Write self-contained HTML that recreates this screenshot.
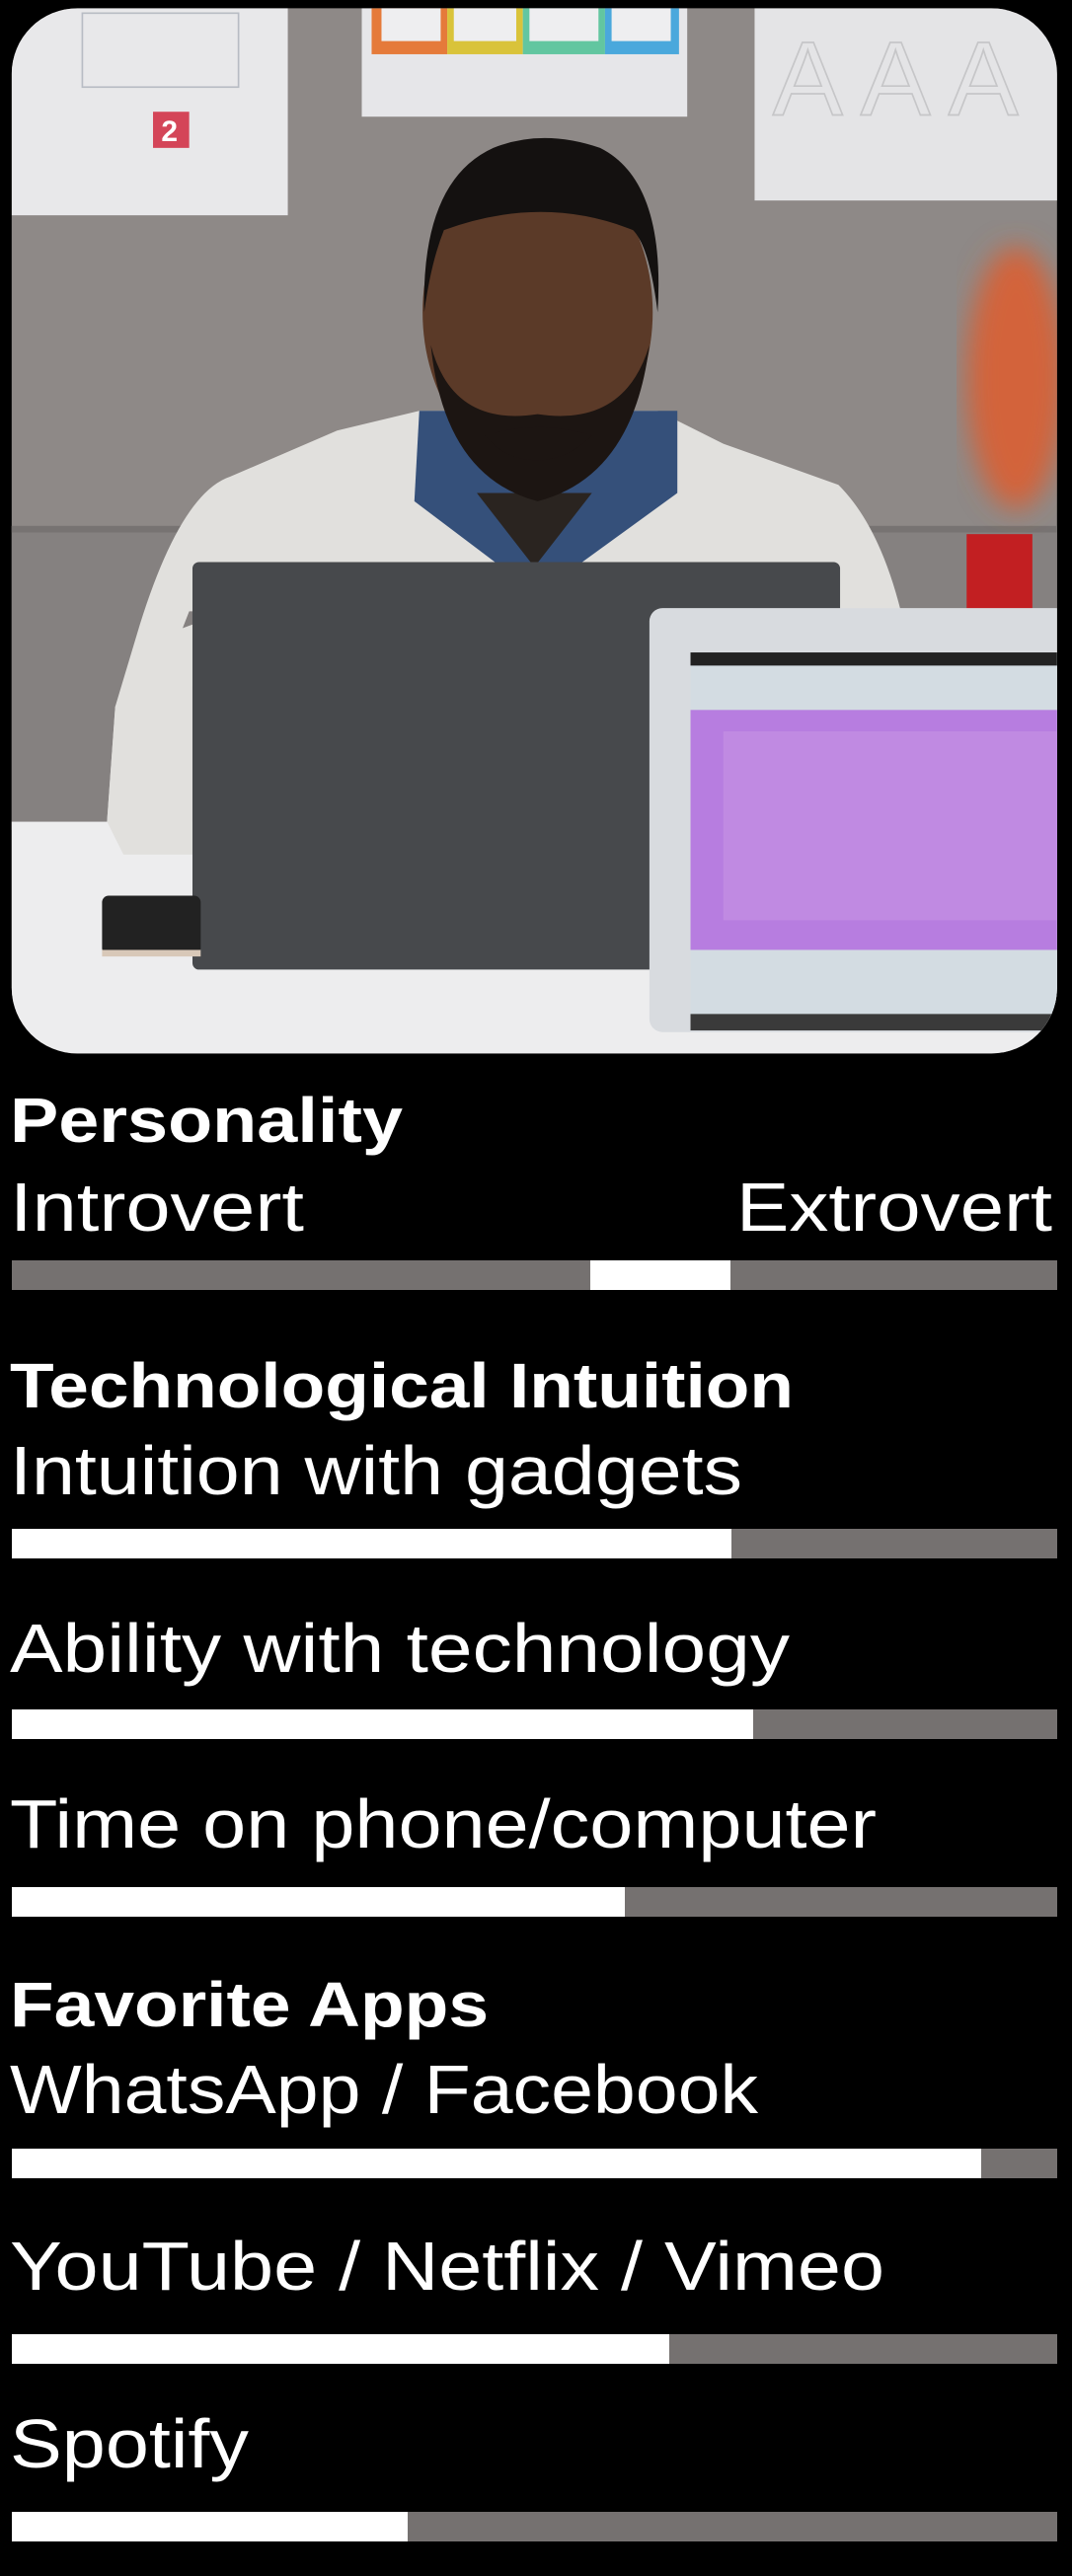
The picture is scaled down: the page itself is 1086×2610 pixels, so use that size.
<!DOCTYPE html>
<html><head><meta charset="utf-8"><style>
html,body{margin:0;padding:0;background:#000;}
body{width:1086px;height:2610px;overflow:hidden;position:relative;}
svg{position:absolute;left:0;top:0;}
text{fill:#fff;font-family:"Liberation Sans",sans-serif;}
.b{font-weight:bold;font-size:64px;}
.r{font-size:70px;}
</style></head><body>
<svg width="1086" height="1079" viewBox="0 0 652 648">
<defs>
<clipPath id="c"><rect x="7" y="5" width="636" height="636" rx="40"/></clipPath>
<filter id="bl"><feGaussianBlur stdDeviation="8"/></filter>
</defs>
<g clip-path="url(#c)">
<rect x="0" y="0" width="652" height="648" fill="#8e8987"/>
<rect x="0" y="320" width="652" height="185" fill="#858180"/>
<rect x="0" y="320" width="652" height="4" fill="#777372"/>
<rect x="0" y="500" width="652" height="148" fill="#ededee"/>
<rect x="7" y="5" width="168" height="126" fill="#e8e8ea"/>
<rect x="50" y="8" width="95" height="45" fill="none" stroke="#b8bcc4" stroke-width="1"/>
<rect x="93" y="68" width="22" height="22" fill="#d44558"/>
<text x="98" y="86" style="font-size:18px;font-weight:bold">2</text>
<rect x="220" y="5" width="198" height="66" fill="#e6e6e9"/>
<rect x="226" y="5" width="46" height="28" fill="#e57a3a"/>
<rect x="272" y="5" width="46" height="28" fill="#d9c33a"/>
<rect x="318" y="5" width="50" height="28" fill="#62c6a0"/>
<rect x="368" y="5" width="45" height="28" fill="#4aa8dc"/>
<rect x="232" y="5" width="36" height="20" fill="#eeeef0"/>
<rect x="276" y="5" width="38" height="20" fill="#eeeef0"/>
<rect x="322" y="5" width="42" height="20" fill="#eeeef0"/>
<rect x="372" y="5" width="36" height="20" fill="#eeeef0"/>
<rect x="459" y="5" width="190" height="117" fill="#e4e4e6"/>
<text x="470" y="70" style="font-size:64px;fill:none;stroke:#c6c6c8">A A A</text>
<rect x="588" y="325" width="40" height="48" fill="#c21f22"/>
<ellipse cx="618" cy="230" rx="30" ry="80" fill="#d3643a" filter="url(#bl)"/>
<path d="M65 500 L70 430 L85 380 Q110 300 140 290 L205 262 L255 250 L400 250 L440 270 L510 295 Q535 320 548 372 L520 372 L115 372 Z" fill="#e1e0dd"/>
<path d="M65 500 L70 430 L90 390 L117 380 L117 520 L75 520 Z" fill="#e1e0dd"/>
<path d="M255 250 L252 305 L305 345 L350 345 L412 300 L412 250 Z" fill="#35507a"/>
<path d="M290 300 L325 345 L360 300 Z" fill="#2a2420"/>
<ellipse cx="327" cy="190" rx="70" ry="95" fill="#5b3a28"/>
<path d="M258 190 Q256 110 300 90 Q330 78 365 90 Q405 110 400 190 Q395 150 385 140 Q330 118 270 140 Q262 160 258 190 Z" fill="#141110"/>
<path d="M262 210 Q270 290 327 305 Q385 290 395 210 Q380 260 327 252 Q275 260 262 210 Z" fill="#1c1512"/>
<path d="M295 265 Q327 255 360 265 Q345 280 327 280 Q307 280 295 265 Z" fill="#1c1512"/>
<rect x="117" y="342" width="394" height="248" rx="4" fill="#47494c"/>
<rect x="62" y="545" width="60" height="36" rx="4" fill="#222"/>
<rect x="62" y="578" width="60" height="4" fill="#d8c8b8"/>
<rect x="395" y="370" width="255" height="258" rx="8" fill="#d8dbdf"/>
<rect x="420" y="397" width="230" height="220" fill="#d3dce2"/>
<rect x="420" y="397" width="230" height="8" fill="#222"/>
<rect x="420" y="432" width="230" height="146" fill="#b77de0"/>
<rect x="440" y="445" width="210" height="115" fill="#c08ae2"/>
<rect x="420" y="617" width="230" height="10" fill="#3a3a3a"/>
</g>
</svg>
<svg width="1086" height="2610" style="top:0">
<text class="b" x="10" y="1157" textLength="398" lengthAdjust="spacingAndGlyphs">Personality</text>
<text class="r" x="10" y="1247" textLength="298" lengthAdjust="spacingAndGlyphs">Introvert</text>
<text class="r" x="746" y="1247" textLength="320" lengthAdjust="spacingAndGlyphs">Extrovert</text>
<rect x="12" y="1277" width="1059" height="30" fill="#757170"/>
<rect x="598" y="1277" width="142" height="30" fill="#fff"/>

<text class="b" x="10" y="1426" textLength="794" lengthAdjust="spacingAndGlyphs">Technological Intuition</text>
<text class="r" x="10" y="1514" textLength="742" lengthAdjust="spacingAndGlyphs">Intuition with gadgets</text>
<rect x="12" y="1549" width="1059" height="30" fill="#757170"/>
<rect x="12" y="1549" width="729" height="30" fill="#fff"/>

<text class="r" x="10" y="1694" textLength="790" lengthAdjust="spacingAndGlyphs">Ability with technology</text>
<rect x="12" y="1732" width="1059" height="30" fill="#757170"/>
<rect x="12" y="1732" width="751" height="30" fill="#fff"/>

<text class="r" x="10" y="1872" textLength="878" lengthAdjust="spacingAndGlyphs">Time on phone/computer</text>
<rect x="12" y="1912" width="1059" height="30" fill="#757170"/>
<rect x="12" y="1912" width="621" height="30" fill="#fff"/>

<text class="b" x="10" y="2053" textLength="485" lengthAdjust="spacingAndGlyphs">Favorite Apps</text>
<text class="r" x="10" y="2141" textLength="758" lengthAdjust="spacingAndGlyphs">WhatsApp / Facebook</text>
<rect x="12" y="2177" width="1059" height="30" fill="#757170"/>
<rect x="12" y="2177" width="982" height="30" fill="#fff"/>

<text class="r" x="10" y="2320" textLength="886" lengthAdjust="spacingAndGlyphs">YouTube / Netflix / Vimeo</text>
<rect x="12" y="2365" width="1059" height="30" fill="#757170"/>
<rect x="12" y="2365" width="666" height="30" fill="#fff"/>

<text class="r" x="10" y="2500" textLength="242" lengthAdjust="spacingAndGlyphs">Spotify</text>
<rect x="12" y="2545" width="1059" height="30" fill="#757170"/>
<rect x="12" y="2545" width="401" height="30" fill="#fff"/>
</svg>
</body></html>
